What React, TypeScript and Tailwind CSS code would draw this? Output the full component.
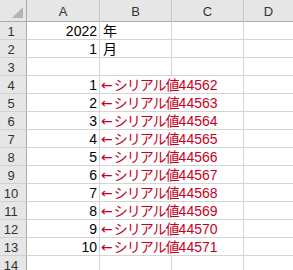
const cols = ["A", "B", "C", "D"];

const cellFont = { fontFamily: '"Liberation Sans", "Noto Sans CJK JP", sans-serif' };

function RowHead({ n }: { n: number }) {
  return (
    <div className="flex h-[18px] items-end justify-center border-r border-b border-r-[#ababab] border-b-[#d0d0d0] bg-[#e6e6e6] pr-1 pb-[1px] text-[13px] leading-none text-[#333]">
      {n}
    </div>
  );
}

function Plain({ n, a, b }: { n: number; a?: string; b?: string }) {
  return (
    <>
      <RowHead n={n} />
      <div className="flex h-[18px] items-end justify-end border-r border-b border-[#d4d4d4] pr-[2px] pb-[1px] text-[14px] leading-none text-black">
        {a}
      </div>
      <div className="flex h-[18px] items-end border-r border-b border-[#d4d4d4] pl-[3px] pb-[1px] text-[14px] leading-none text-black">
        {b}
      </div>
      <div className="h-[18px] border-r border-b border-[#d4d4d4]" />
      <div className="h-[18px] border-b border-[#d4d4d4]" />
    </>
  );
}

function Serial({ n, i }: { n: number; i: number }) {
  return (
    <>
      <RowHead n={n} />
      <div className="flex h-[18px] items-end justify-end border-r border-b border-[#d4d4d4] pr-[2px] pb-[1px] text-[14px] leading-none text-black">
        {i}
      </div>
      <div className="col-span-2 flex h-[18px] items-end overflow-hidden whitespace-nowrap border-r border-b border-[#d4d4d4] pl-[1px] pb-[1px] text-[14px] leading-none text-[#c8001e]">
        <span className="mr-[1px] font-['DejaVu_Sans']">←</span>
        <span className="tracking-[-1px]">シリアル値</span>
        <span>{44561 + i}</span>
      </div>
      <div className="h-[18px] border-b border-[#d4d4d4]" />
    </>
  );
}

export default function App() {
  return (
    <div className="h-[270px] w-[293px] overflow-hidden bg-white" style={cellFont}>
      <div className="grid grid-cols-[27px_73px_72px_72px_1fr]">
        {/* corner */}
        <div className="relative h-[22px] border-r border-b border-[#ababab] bg-[#e6e6e6]">
          <svg className="absolute right-[3px] bottom-[3px]" width="11" height="11" viewBox="0 0 11 11">
            <polygon points="11,0 11,11 0,11" fill="#b4b4b4" />
          </svg>
        </div>
        {cols.map((c, k) => (
          <div
            key={c}
            className={`flex h-[22px] items-end justify-center border-b border-b-[#ababab] bg-[#e6e6e6] pb-[3px] text-[13px] leading-none text-[#333] ${k < 3 ? "border-r border-r-[#c8c8c8]" : ""}`}
          >
            {c}
          </div>
        ))}

        <Plain n={1} a="2022" b="年" />
        <Plain n={2} a="1" b="月" />
        <Plain n={3} />
        {[1, 2, 3, 4, 5, 6, 7, 8, 9, 10].map((i) => (
          <Serial key={i} n={i + 3} i={i} />
        ))}
        <Plain n={14} />
      </div>
    </div>
  );
}
